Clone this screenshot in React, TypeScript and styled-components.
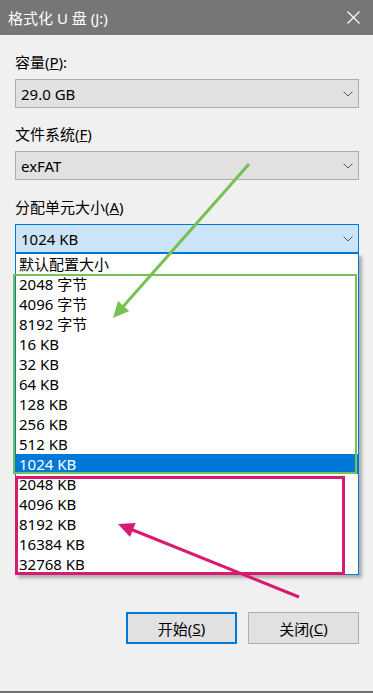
import React from 'react';
import styled, { createGlobalStyle } from 'styled-components';

const GlobalStyle = createGlobalStyle`
  html, body {
    margin: 0;
    padding: 0;
    background: #f0f0f0;
  }
  body {
    font-family: "Noto Sans", "Noto Sans CJK SC", sans-serif;
    font-size: 15px;
    color: #000;
  }
`;

const Window = styled.div`
  position: relative;
  width: 373px;
  height: 693px;
  box-sizing: border-box;
  background: #f0f0f0;
  border-bottom: 2px solid #6e6e6e;
  overflow: hidden;
`;

const TitleBar = styled.div`
  height: 35px;
  background: #767676;
  color: #fff;
  display: flex;
  align-items: center;
  justify-content: space-between;
  padding: 0 13px 0 8px;
  font-size: 15px;
`;

const CloseIcon = styled.svg`
  width: 13px;
  height: 13px;
  display: block;
`;

const Body = styled.div`
  padding: 17px 14px 0 15px;
  display: flex;
  flex-direction: column;
`;

const Field = styled.div<{ $gap?: number }>`
  display: flex;
  flex-direction: column;
  margin-top: ${p => p.$gap ?? 0}px;
`;

const Label = styled.div`
  height: 20px;
  line-height: 20px;
  margin-bottom: 7px;
  white-space: nowrap;
`;

const Combo = styled.div<{ $active?: boolean }>`
  height: 29px;
  box-sizing: border-box;
  border: 1px solid ${p => (p.$active ? '#0078d7' : '#adadad')};
  background: ${p => (p.$active ? '#cce4f7' : '#e1e1e1')};
  display: flex;
  align-items: center;
  justify-content: space-between;
  padding: 0 5px 0 5px;
`;

const Chevron = styled.svg`
  width: 10px;
  height: 6px;
  display: block;
`;

const List = styled.div`
  border: 1px solid #0078d7;
  background: #fff;
  box-shadow: 3px 3px 3px rgba(0, 0, 0, 0.28);
  margin-bottom: 37px;
`;

const Item = styled.div<{ $selected?: boolean }>`
  height: 20px;
  line-height: 20px;
  padding-left: 3px;
  background: ${p => (p.$selected ? '#0078d7' : 'transparent')};
  color: ${p => (p.$selected ? '#fff' : '#000')};
  white-space: nowrap;
`;

const ButtonRow = styled.div`
  display: flex;
  justify-content: flex-end;
  gap: 11px;
`;

const Button = styled.div<{ $default?: boolean }>`
  width: 111px;
  height: 32px;
  box-sizing: border-box;
  background: #e1e1e1;
  border: ${p => (p.$default ? '2px solid #0078d7' : '1px solid #adadad')};
  display: flex;
  align-items: center;
  justify-content: center;
`;

const Overlay = styled.svg`
  position: absolute;
  left: 0;
  top: 0;
  width: 373px;
  height: 693px;
  pointer-events: none;
`;

const Arrow: React.FC<{ x1: number; y1: number; x2: number; y2: number; color: string }> = ({
  x1,
  y1,
  x2,
  y2,
  color,
}) => {
  const dx = x2 - x1;
  const dy = y2 - y1;
  const len = Math.hypot(dx, dy);
  const ux = dx / len;
  const uy = dy / len;
  const head = 16;
  const half = 7.5;
  const bx = x2 - ux * head;
  const by = y2 - uy * head;
  const pts = [
    `${x2},${y2}`,
    `${bx - uy * half},${by + ux * half}`,
    `${bx + uy * half},${by - ux * half}`,
  ].join(' ');
  return (
    <g>
      <line x1={x1} y1={y1} x2={bx + ux * 2} y2={by + uy * 2} stroke={color} strokeWidth={3} />
      <polygon points={pts} fill={color} />
    </g>
  );
};

const sizes = [
  '默认配置大小',
  '2048 字节',
  '4096 字节',
  '8192 字节',
  '16 KB',
  '32 KB',
  '64 KB',
  '128 KB',
  '256 KB',
  '512 KB',
  '1024 KB',
  '2048 KB',
  '4096 KB',
  '8192 KB',
  '16384 KB',
  '32768 KB',
];

const Down = () => (
  <Chevron viewBox="0 0 10 6">
    <polyline points="0.5,0.5 5,5 9.5,0.5" fill="none" stroke="#555" strokeWidth="1" />
  </Chevron>
);

const App: React.FC = () => {
  return (
    <Window>
      <GlobalStyle />
      <TitleBar>
        <span>格式化 U 盘 (J:)</span>
        <CloseIcon viewBox="0 0 13 13">
          <path d="M0.5 0.5 L12.5 12.5 M12.5 0.5 L0.5 12.5" stroke="#fff" strokeWidth="1.2" />
        </CloseIcon>
      </TitleBar>
      <Body>
        <Field>
          <Label>
            容量(<u>P</u>):
          </Label>
          <Combo>
            <span>29.0 GB</span>
            <Down />
          </Combo>
        </Field>
        <Field $gap={16}>
          <Label>
            文件系统(<u>F</u>)
          </Label>
          <Combo>
            <span>exFAT</span>
            <Down />
          </Combo>
        </Field>
        <Field $gap={17}>
          <Label>
            分配单元大小(<u>A</u>)
          </Label>
          <Combo $active>
            <span>1024 KB</span>
            <Down />
          </Combo>
          <List>
            {sizes.map(s => (
              <Item key={s} $selected={s === '1024 KB'}>
                {s}
              </Item>
            ))}
          </List>
        </Field>
        <ButtonRow>
          <Button $default>
            开始(<u>S</u>)
          </Button>
          <Button>
            关闭(<u>C</u>)
          </Button>
        </ButtonRow>
      </Body>
      <Overlay viewBox="0 0 373 693">
        <rect x={14} y={275} width={342} height={198} fill="none" stroke="#76c152" strokeWidth={2} />
        <rect x={16.5} y={477.5} width={327} height={96} fill="none" stroke="#d81b72" strokeWidth={3} />
        <Arrow x1={249} y1={164} x2={113} y2={318} color="#76c152" />
        <Arrow x1={299} y1={597} x2={118} y2={524} color="#d81b72" />
      </Overlay>
    </Window>
  );
};

export default App;
